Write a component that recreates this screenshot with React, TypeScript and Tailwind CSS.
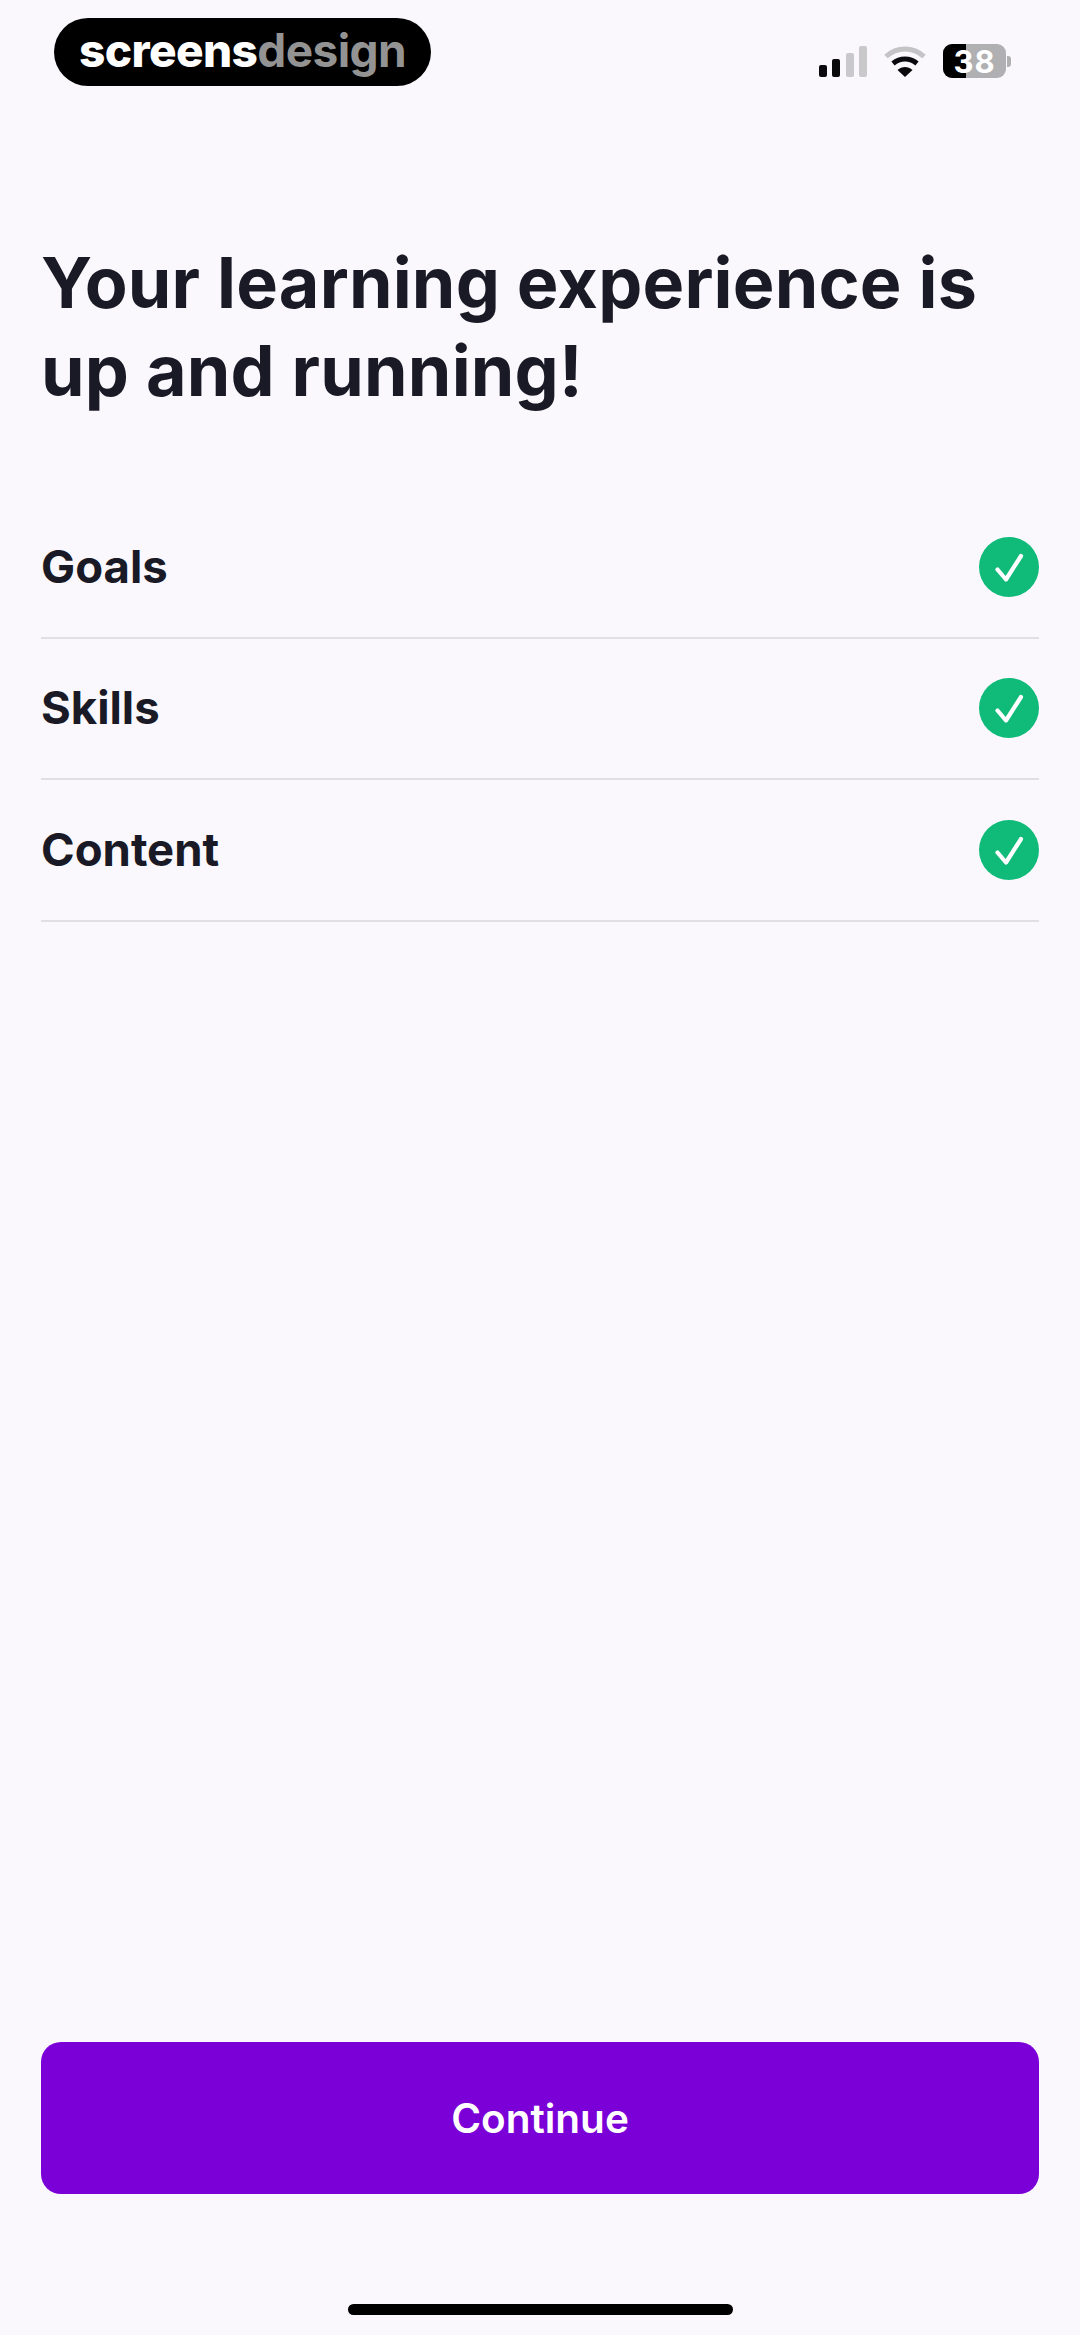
import React from 'react';

const ROWS = ['Goals', 'Skills', 'Content'];

const font = { inter: 'font-["Inter",sans-serif]' };

function CheckBadge() {
  return (
    <div className="w-[60px] h-[60px] rounded-full bg-[#10bb7a] flex items-center justify-center">
      <svg width="60" height="60" viewBox="0 0 60 60" fill="none">
        <path d="M18.5 32.5 L27 42.5 L42 19" stroke="#fff" strokeWidth="4.2" strokeLinecap="round" strokeLinejoin="round" />
      </svg>
    </div>
  );
}

function StatusIcons() {
  return (
    <div className="flex items-center gap-[17px]">
      {/* signal */}
      <div className="flex items-end gap-[5.4px] h-[32px]">
        <div className="w-[8px] h-[12px] rounded-[2px] bg-[#0a0a0c]" />
        <div className="w-[8px] h-[18px] rounded-[2px] bg-[#0a0a0c]" />
        <div className="w-[8px] h-[24px] rounded-[2px] bg-[#c9c8cb]" />
        <div className="w-[8px] h-[31px] rounded-[2px] bg-[#c9c8cb]" />
      </div>
      {/* wifi */}
      <svg width="42" height="32" viewBox="0 0 42 32" fill="none">
        <path d="M2 11.5 C13 1.5 29 1.5 40 11.5" stroke="#c4c3c6" strokeWidth="5" />
        <path d="M9 18.5 C16 12.5 26 12.5 33 18.5" stroke="#0a0a0c" strokeWidth="5" />
        <path d="M13.5 25 L21 32 L28.5 25 C24 21 18 21 13.5 25 Z" fill="#0a0a0c" />
      </svg>
      {/* battery */}
      <div className="flex items-center gap-[1px]">
        <div className="relative w-[63px] h-[34px] rounded-[9px] overflow-hidden bg-[#b0afb2] flex items-center justify-center">
          <div className="absolute left-0 top-0 bottom-0 w-[23px] bg-black" />
          <span className={`relative text-white text-[31px] font-bold leading-none tracking-[1px] ${font.inter}`}>38</span>
        </div>
        <div className="w-[4px] h-[11px] rounded-r-[3px] bg-[#b0afb2]" />
      </div>
    </div>
  );
}

export default function App() {
  return (
    <div className={`w-[1080px] h-[2335px] bg-[#faf8fc] flex flex-col overflow-hidden ${font.inter}`}>
      {/* top bar */}
      <div className="flex items-start justify-between pt-[18px] pl-[54px] pr-[69px] h-[86px] shrink-0">
        <div className="w-[377px] h-[68px] rounded-full bg-black flex items-center justify-center">
          <span className="text-[46px] font-extrabold leading-none tracking-[-0.6px] pb-[4px] text-white">
            screens<span className="text-[#939393] font-bold">design</span>
          </span>
        </div>
        <div className="pt-[26px]">
          <StatusIcons />
        </div>
      </div>

      {/* title */}
      <h1 className="mt-[153px] px-[41px] text-[70px] leading-[88px] font-bold tracking-[0.2px] text-[#1a1a26]">
        Your learning experience is<br />up and running!
      </h1>

      {/* checklist */}
      <div className="mt-[82px] mx-[41px]">
        {ROWS.map((row) => (
          <div key={row} className="h-[141.5px] border-b-2 border-[#e0dfe4] flex items-center justify-between">
            <span className="text-[45.5px] font-bold text-[#1a1a26]">{row}</span>
            <CheckBadge />
          </div>
        ))}
      </div>

      {/* bottom */}
      <div className="mt-auto px-[41px]">
        <button className="w-full h-[152px] pt-[2px] rounded-[20px] bg-[#7b00d8] text-white text-[40.5px] font-semibold">
          Continue
        </button>
      </div>
      <div className="flex justify-center pt-[110px] pb-[20px]">
        <div className="w-[385px] h-[11px] rounded-full bg-black" />
      </div>
    </div>
  );
}
